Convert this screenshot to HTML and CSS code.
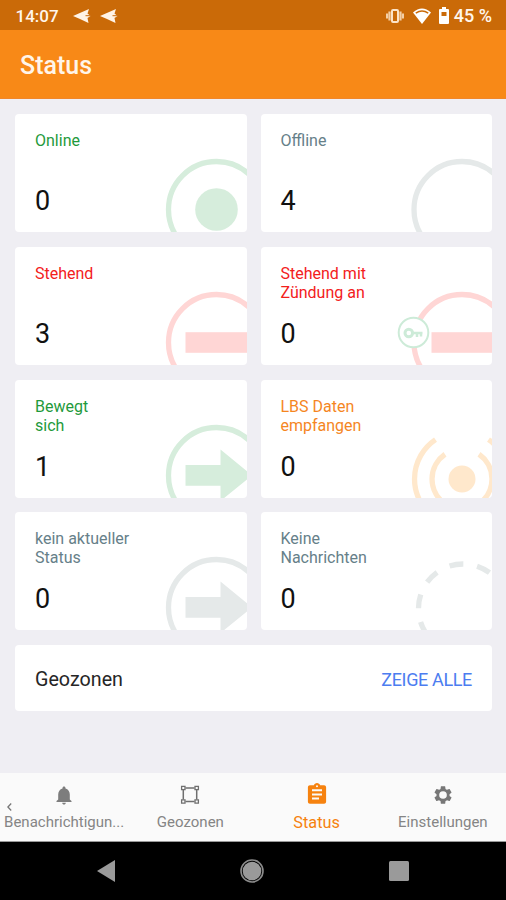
FILE: index.html
```
<!DOCTYPE html>
<html lang="de">
<head>
    <meta charset="UTF-8">
    <meta name="viewport" content="width=device-width, initial-scale=1">
    <title>Status</title>
    <link rel="stylesheet" href="styles.css">
</head>
<body>
    <div class="statusbar">
        <span class="clock">14:07</span>
        <svg class="plane" width="18" height="16" viewBox="0 0 18 16"><path d="M0 8 16 1 14.500 5.500 17.500 8 14.500 10 15.500 15 7 11z" fill="#fff3e6"/><path d="M12.500 7.700h5" stroke="#ca6a08" stroke-width="1"/></svg>
        <svg class="plane" width="18" height="16" viewBox="0 0 18 16"><path d="M0 8 16 1 14.500 5.500 17.500 8 14.500 10 15.500 15 7 11z" fill="#fff3e6"/><path d="M12.500 7.700h5" stroke="#ca6a08" stroke-width="1"/></svg>
        <div class="system">
            <svg width="18" height="14" viewBox="0 0 18 14"><path d="M1 4.500v5M3.500 2.500v9M14.500 2.500v9M17 4.500v5" stroke="#f3cfa6" stroke-width="2.200"/><rect x="6" y="1" width="6" height="12" rx="1" fill="none" stroke="#fbe3c8" stroke-width="2"/></svg>
            <svg class="wifi" width="18" height="16" viewBox="0 0 18 16"><path d="M0 4.500Q9-3.500 18 4.500L9 16z" fill="#fff"/><path d="M2.800 5.200Q9 .8 15.200 5.200" fill="none" stroke="#ca6a08" stroke-width="1.500"/></svg>
            <svg class="battery" width="10" height="17" viewBox="0 0 10 17"><path d="M3 0h4v2h2q1 0 1 1v13q0 1-1 1H1q-1 0-1-1V3q0-1 1-1h2z" fill="#fff"/><path d="M2.500 5h5v4h-5z" fill="#ca6a08"/></svg>
            <span class="percent">45 %</span>
        </div>
    </div>

    <header class="header">
        <h1>Status</h1>
    </header>

    <main class="content">
        <div class="cards">
            <div class="card green">
                <svg class="art" viewBox="0 0 231 118">
                    <circle class="ring" cx="200.500" cy="95.500" r="48"/>
                    <circle class="fill" cx="200.500" cy="95.500" r="21.300"/>
                </svg>
                <h2>Online</h2>
                <p>0</p>
            </div>
            <div class="card grey">
                <svg class="art" viewBox="0 0 231 118">
                    <circle class="ring" cx="201" cy="95.500" r="48"/>
                </svg>
                <h2>Offline</h2>
                <p>4</p>
            </div>
            <div class="card red">
                <svg class="art" viewBox="0 0 231 118">
                    <circle class="ring" cx="200.500" cy="95.500" r="48"/>
                    <rect class="fill" x="169.500" y="85.200" width="63" height="20.600"/>
                </svg>
                <h2>Stehend</h2>
                <p>3</p>
            </div>
            <div class="card red">
                <svg class="art" viewBox="0 0 231 118">
                    <circle class="ring" cx="201" cy="95.500" r="48"/>
                    <rect class="fill" x="170.500" y="85.200" width="62" height="20.600"/>
                    <g class="key">
                        <circle cx="152.500" cy="85.500" r="14.800"/>
                        <circle class="bow" cx="147.800" cy="86" r="3.800"/>
                        <path d="M151.500 86H161.500M156 86v4M160 86v3.500"/>
                    </g>
                </svg>
                <h2>Stehend mit<br>Zündung an</h2>
                <p>0</p>
            </div>
            <div class="card green">
                <svg class="art" viewBox="0 0 231 118">
                    <circle class="ring" cx="200.500" cy="95.500" r="48"/>
                    <path class="fill" d="M169.500 85h35V69.500L236 95.300 204.500 121v-15.300h-35z"/>
                </svg>
                <h2>Bewegt<br>sich</h2>
                <p>1</p>
            </div>
            <div class="card orange">
                <svg class="art" viewBox="0 0 231 118">
                    <circle class="fill" cx="201" cy="99" r="13.500"/>
                    <path class="ring" d="M184 74.300a30 30 0 0 0 0 49.400M218 74.300a30 30 0 0 1 0 49.400"/>
                    <path class="ring" d="M174.500 59.600a47.500 47.500 0 0 0 0 78.800M227.500 59.600a47.500 47.500 0 0 1 0 78.800"/>
                </svg>
                <h2>LBS Daten<br>empfangen</h2>
                <p>0</p>
            </div>
            <div class="card grey">
                <svg class="art" viewBox="0 0 231 118">
                    <circle class="ring" cx="200.500" cy="95.500" r="48"/>
                    <path class="fill" d="M169.500 85h35V69.500L236 95.300 204.500 121v-15.300h-35z"/>
                </svg>
                <h2>kein aktueller<br>Status</h2>
                <p>0</p>
            </div>
            <div class="card grey">
                <svg class="art" viewBox="0 0 231 118">
                    <circle class="ring dashed" cx="202" cy="96.500" r="44.500"/>
                </svg>
                <h2>Keine<br>Nachrichten</h2>
                <p>0</p>
            </div>
        </div>

        <div class="zones">
            <span class="zones-title">Geozonen</span>
            <a class="zones-link">ZEIGE ALLE</a>
        </div>
    </main>

    <nav class="tabs">
        <svg class="back" width="5" height="8" viewBox="0 0 5 8"><path d="M4.200.500.900 4l3.300 3.500" fill="none" stroke="#777" stroke-width="1.300"/></svg>
        <a class="tab">
            <svg width="24" height="24" viewBox="0 0 24 24"><path fill="#7d7d7d" d="M12 21.500c1 0 1.800-.8 1.800-1.800h-3.600c0 1 .8 1.800 1.800 1.800zM17.800 16.500v-5c0-2.900-1.600-5.300-4.300-6V4.900c0-.8-.7-1.500-1.500-1.500s-1.500.7-1.500 1.500v.6c-2.700.7-4.300 3.100-4.300 6v5L4.500 18v1h15v-1z"/></svg>
            <span>Benachrichtigun...</span>
        </a>
        <a class="tab">
            <svg width="24" height="24" viewBox="0 0 24 24" fill="none" stroke="#6f6f6f"><path stroke-width="1.500" d="M7.500 5h9M7.500 18.500h9M5.300 7v9.500M18.700 7v9.500"/><path stroke-width="1.300" d="M3.600 3.300H7v3.400H3.600zM17 3.300h3.400v3.400H17zM3.600 16.800H7v3.400H3.600zM17 16.800h3.400v3.400H17z"/></svg>
            <span>Geozonen</span>
        </a>
        <a class="tab active">
            <svg width="24" height="24" viewBox="0 0 24 24"><path fill="#f6820f" d="M19.100 3.200h-4C14.700 2 13.500 1 12 1S9.300 2 8.900 3.200h-4c-1.100 0-2 .9-2 2v14.600c0 1.100.9 2 2 2h14.200c1.100 0 2-.9 2-2V5.200c0-1.100-.9-2-2-2zM12 3.200a1 1 0 1 1 0 2 1 1 0 0 1 0-2zM14 17.500H7v-2h7zM17 13.500H7v-2h10zM17 9.300H7v-2h10z"/></svg>
            <span>Status</span>
        </a>
        <a class="tab">
            <svg width="24" height="24" viewBox="0 0 24 24"><path fill="#777" transform="translate(1.100 1.100) scale(.91)" d="M19.140 12.940c.04-.3.060-.61.060-.94 0-.32-.02-.64-.07-.94l2.030-1.580c.18-.14.230-.41.120-.61l-1.920-3.320c-.12-.22-.37-.29-.59-.22l-2.390.96c-.5-.38-1.030-.7-1.620-.94l-.36-2.540c-.04-.24-.24-.41-.48-.41h-3.840c-.24 0-.43.170-.47.410l-.36 2.540c-.59.240-1.130.570-1.620.940l-2.390-.96c-.22-.08-.47 0-.59.220L2.740 8.870c-.12.210-.08.470.120.610l2.030 1.580c-.05.300-.09.630-.09.940s.02.640.070.940l-2.030 1.580c-.18.140-.23.410-.12.610l1.920 3.320c.12.220.370.290.590.220l2.390-.96c.5.380 1.030.700 1.620.940l.36 2.540c.05.240.240.410.480.410h3.840c.24 0 .44-.17.470-.41l.36-2.540c.59-.24 1.130-.56 1.620-.94l2.390.96c.22.080.47 0 .59-.22l1.920-3.320c.12-.22.070-.47-.12-.61l-2.010-1.580zM12 16.200a4.200 4.200 0 1 1 0-8.400 4.200 4.200 0 0 1 0 8.400z"/></svg>
            <span>Einstellungen</span>
        </a>
    </nav>

    <div class="sysnav">
        <svg width="18" height="22" viewBox="0 0 18 22"><path d="M0 11 18 0v22z" fill="#9a9a9a"/></svg>
        <svg width="24" height="24" viewBox="0 0 24 24"><circle cx="12" cy="12" r="11" fill="none" stroke="#8c8c8c" stroke-width="1.600"/><circle cx="12" cy="12" r="9.300" fill="#9a9a9a"/></svg>
        <svg width="20" height="20" viewBox="0 0 20 20"><rect width="20" height="20" rx="1.500" fill="#9a9a9a"/></svg>
    </div>
</body>
</html>
```

FILE: styles.css
```
* {
    box-sizing: border-box;
}

body {
    margin: 0;
    height: 900px;
    display: flex;
    flex-direction: column;
    overflow: hidden;
    font-family: Roboto, "Liberation Sans", sans-serif;
    background-color: #efeef3;
}

h1, h2, p {
    margin: 0;
}

svg {
    display: block;
    flex: none;
}

/* Android status bar */
.statusbar {
    height: 30px;
    flex: none;
    display: flex;
    align-items: center;
    padding: 1px 14px 0 15.5px;
    background-color: #ca6a08;
    color: #fff6ec;
    font-size: 17px;
    font-weight: 500;
}

.clock {
    width: 57px;
}

.plane {
    margin-right: 9px;
}

.system {
    margin-left: auto;
    display: flex;
    align-items: center;
}

.percent {
    font-size: 18px;
}

.wifi {
    margin-left: 9px;
}

.battery {
    margin: 0 5px 0 8px;
}

.header {
    height: 69px;
    flex: none;
    display: flex;
    align-items: center;
    padding: 3px 20px 0;
    background-color: #f88917;
    border-bottom: 1px solid #f0862a;
}

.header h1 {
    color: #fff5ea;
    font-size: 25px;
    font-weight: 500;
}

.content {
    flex: 1;
    padding: 15px 14px 0 15px;
}

.cards {
    display: grid;
    grid-template-columns: 1fr 1fr;
    grid-auto-rows: 118px;
    gap: 14.8px 14px;
}

.card {
    position: relative;
    overflow: hidden;
    display: flex;
    flex-direction: column;
    justify-content: space-between;
    padding: 17px 20px 14px;
    border-radius: 4px;
    background-color: #fff;
}

.card h2 {
    position: relative;
    font-size: 16px;
    font-weight: 400;
    line-height: 19px;
}

.card p {
    position: relative;
    font-size: 27px;
    line-height: 34px;
    color: #111;
}

/* Watermark in the card's corner */
.art {
    position: absolute;
    left: .5px;
    top: 0;
    width: 231px;
    height: 118px;
    overflow: visible;
}

.ring {
    fill: none;
    stroke: currentColor;
    stroke-width: 5.3;
}

.fill {
    fill: currentColor;
}

.dashed {
    stroke-dasharray: 14 13.960;
}

.key {
    fill: #fff;
    stroke: #cdebd8;
    stroke-width: 2;
}

.key .bow {
    stroke-width: 3;
}

.key path {
    stroke-width: 2.500;
}

.green h2 { color: #1f9a3c; }
.green .art { color: #d6eddc; }
.grey h2 { color: #668089; }
.grey .art { color: #e5e9e9; }
.red h2 { color: #f3201c; }
.red .art { color: #ffd6d5; }
.orange h2 { color: #f5861f; }
.orange .art { color: #ffe8cc; }

.zones {
    height: 66px;
    margin-top: 15px;
    padding: 2px 20px 0;
    display: flex;
    align-items: center;
    justify-content: space-between;
    border-radius: 4px;
    background-color: #fff;
}

.zones-title {
    font-size: 19.7px;
    color: #262626;
}

.zones-link {
    font-size: 18px;
    letter-spacing: -.35px;
    color: #4c7df0;
}

/* Bottom tabs */
.tabs {
    position: relative;
    height: 69px;
    flex: none;
    display: grid;
    grid-template-columns: repeat(4, 1fr);
    padding-left: 1px;
    background-color: #fafafa;
    border-bottom: 1px solid #999;
}

.back {
    position: absolute;
    left: 7px;
    top: 30px;
}

.tab {
    display: flex;
    flex-direction: column;
    align-items: center;
    padding-top: 10px;
    font-size: 15px;
    line-height: 18px;
    color: #858585;
    white-space: nowrap;
}

.tab span {
    margin-top: 6px;
}

.tab.active {
    color: #f6820f;
    font-size: 16.3px;
}

.tab.active svg {
    margin-top: -1px;
}

.tab.active span {
    margin-top: 8px;
}

.sysnav {
    height: 58px;
    flex: none;
    display: flex;
    align-items: center;
    justify-content: space-between;
    padding: 0 97px;
    background-color: #000;
}
```
